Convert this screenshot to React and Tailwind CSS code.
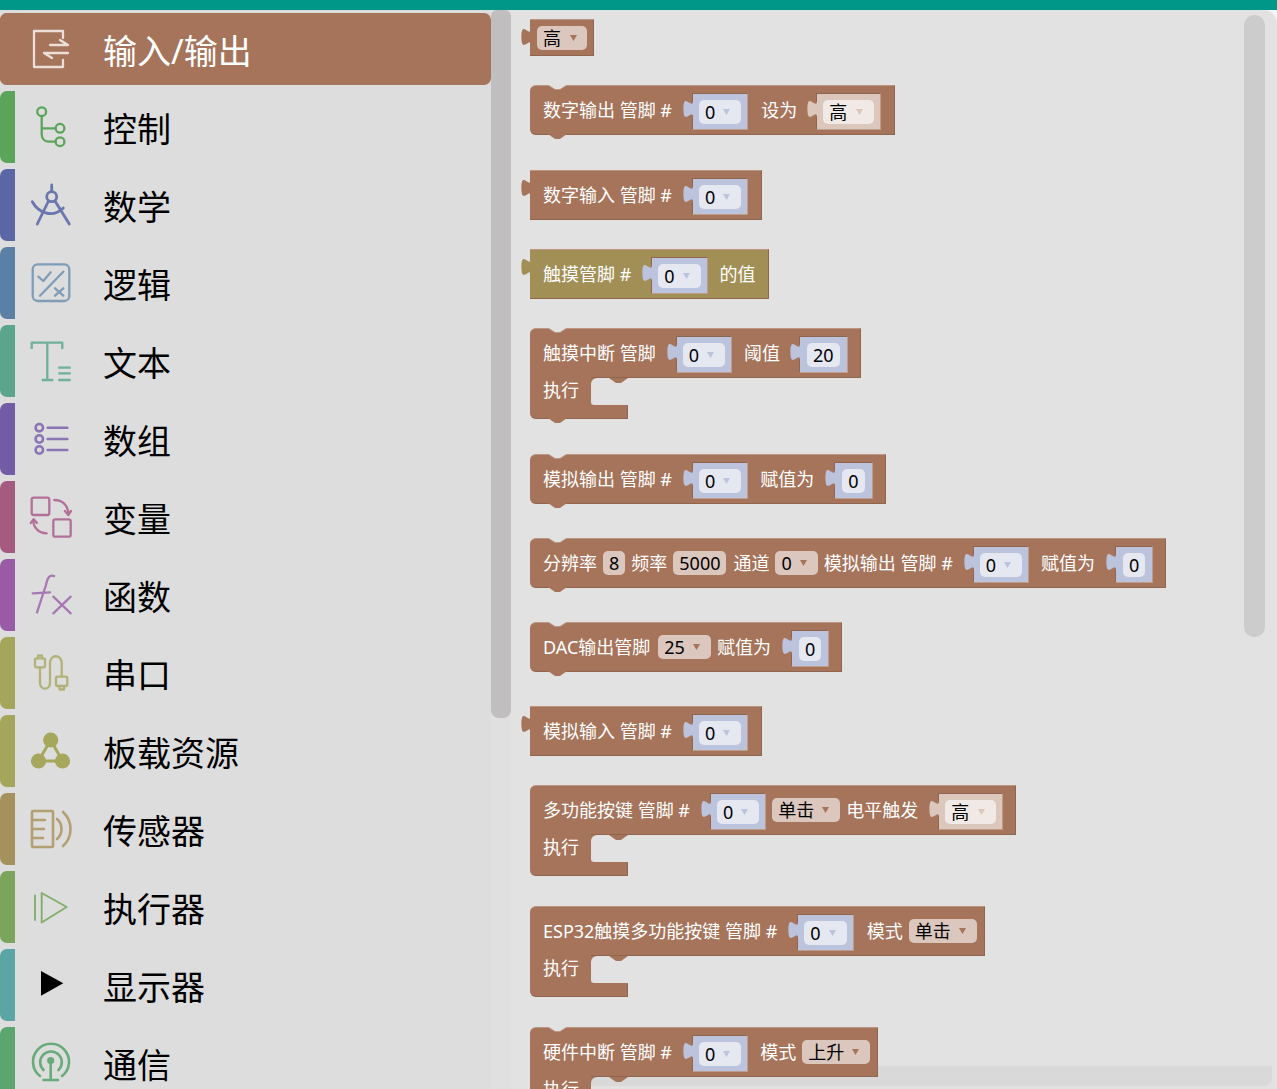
import React from "react";

const BROWN = "#a5745b";
const OLIVE = "#a28f56";

function Icon({ color, children, sw = 2.3 }) {
  return (
    <svg viewBox="27 0 48 72" fill="none" stroke={color} strokeWidth={sw} strokeLinecap="round" strokeLinejoin="round" className="ml-[12px] mr-[28px] h-[72px] w-[48px] shrink-0">
      {children}
    </svg>
  );
}

const categories = [
  { name: "输入/输出", color: BROWN, selected: true, icon: (
    <Icon color="#ecdfd9">
      <path d="M63 25V18H34V54H63V47" />
      <path d="M50 32H68L60 27" />
      <path d="M68 40H44L52 45" />
    </Icon>
  ) },
  { name: "控制", color: "#5ba55b", icon: (
    <Icon color="#5ba55b">
      <circle cx="41.7" cy="20.7" r="4.4" />
      <circle cx="60" cy="37.3" r="4.4" />
      <circle cx="60" cy="50.7" r="4.4" />
      <path d="M41.7 25V43C41.7 48 45 50.7 49 50.7H55.6M41.7 37.3H55.6" />
    </Icon>
  ) },
  { name: "数学", color: "#5b67a5", icon: (
    <Icon color="#6a76ad" sw={2.8}>
      <circle cx="51.7" cy="27.7" r="5" />
      <path d="M51.7 16V22.7M48.5 32L37.3 55M55 32L69.3 55M32.3 32.7C38 43 52 50 63.3 39" />
    </Icon>
  ) },
  { name: "逻辑", color: "#5b80a5", icon: (
    <Icon color="#7f9cb9">
      <rect x="32.7" y="17.3" width="36.6" height="36.7" rx="5" />
      <path d="M40 48.7L63.3 24.7M38.3 29.7L43.3 34L50.7 25.3M55 41.3L63.3 48.7M63.3 41.3L55 48.7" />
    </Icon>
  ) },
  { name: "文本", color: "#5ba58c", icon: (
    <Icon color="#6fb09a">
      <path d="M31.7 24V17.7H62.3V24M47.3 17.7V55M41.7 55H53.3M58.3 42.7H70.7M58.3 48.3H70.7M58.3 55H70.7" strokeLinecap="butt" />
    </Icon>
  ) },
  { name: "数组", color: "#745ba5", icon: (
    <Icon color="#8a74b4" sw={2.6}>
      <circle cx="39.3" cy="24.7" r="3.7" />
      <circle cx="39.3" cy="36" r="3.7" />
      <circle cx="39.3" cy="47" r="3.7" />
      <path d="M47.7 24.7H67.3M47.7 36H67.3M47.7 47H67.3" />
    </Icon>
  ) },
  { name: "变量", color: "#a55b80", icon: (
    <Icon color="#b3719a">
      <rect x="31.7" y="16.7" width="17.6" height="17.3" rx="2" />
      <rect x="53.3" y="38.3" width="17.4" height="17.4" rx="2" />
      <path d="M54.3 19C62 19 68.3 24 68.3 33M65 30L68.3 34L71 30" />
      <path d="M46.7 52.3C39 52.3 33.3 47 33.3 39M30.7 42L33.7 38.3L37 42" />
    </Icon>
  ) },
  { name: "函数", color: "#995ba5", icon: (
    <Icon color="#a878b3">
      <path d="M55 17.5C50 15 47.5 18 46 26L36.7 54.3" strokeLinecap="butt" />
      <path d="M32.7 34.3L50 33.3M53.3 37.7L70.7 54.3M70.7 37.7L53.3 54.3" />
    </Icon>
  ) },
  { name: "串口", color: "#a5a55b", icon: (
    <Icon color="#b1b277">
      <rect x="35" y="21.3" width="10" height="9" rx="1.5" />
      <rect x="56" y="39.7" width="11.3" height="9.3" rx="1.5" />
      <path d="M38 21.3V18.5H42V21.3M40 30.3V46C40 53.5 50 53.5 50 46V26C50 17 61.7 17 61.7 26V39.7M59.5 49V52.5H64V49" />
    </Icon>
  ) },
  { name: "板载资源", color: "#a5a55b", icon: (
    <svg viewBox="27 0 48 72" fill="#a5a85c" stroke="#a5a85c" className="ml-[12px] mr-[28px] h-[72px] w-[48px] shrink-0">
      <circle cx="50.7" cy="25" r="7.6" stroke="none" />
      <circle cx="38.5" cy="46" r="7.6" stroke="none" />
      <circle cx="62.5" cy="46" r="7.6" stroke="none" />
      <path d="M50.7 25L38.5 46H62.5Z" fill="none" strokeWidth="3" />
    </svg>
  ) },
  { name: "传感器", color: "#a5915b", icon: (
    <Icon color="#b39f72" sw={2.6}>
      <rect x="32" y="18" width="21" height="36" rx="1" />
      <path d="M32 27H45M32 36H44M32 45H43M57 26C63 31 63 41 57 46M63 19C73 28 73 44 63 53" />
    </Icon>
  ) },
  { name: "执行器", color: "#7aa55b", icon: (
    <Icon color="#83ae6b" sw={1.9}>
      <path d="M35 24.5V49" />
      <path d="M41.7 22L66.7 36L41.7 51.5Z" />
    </Icon>
  ) },
  { name: "显示器", color: "#5ba5a5", icon: (
    <svg viewBox="27 0 48 72" className="ml-[12px] mr-[28px] h-[72px] w-[48px] shrink-0">
      <path d="M41 22L63.3 34.3L41 46.7Z" fill="#000" />
    </svg>
  ) },
  { name: "通信", color: "#5ba56e", icon: (
    <Icon color="#67ab7a" sw={2.6}>
      <path d="M40 49A18 18 0 1 1 62 49" />
      <path d="M43.5 43A10.8 10.8 0 1 1 58.5 43" />
      <circle cx="50.7" cy="33.5" r="3.6" fill="#67ab7a" stroke="none" />
      <path d="M50.7 36V53M43.5 53H58" />
    </Icon>
  ) },
];

function Tab({ fill, className }) {
  return (
    <svg width="10" height="18" viewBox="0 0 10 18" className={"absolute overflow-visible " + className}>
      <path d="M10 0C10 12 0.4 -9.6 0.4 9S10 6 10 18Z" fill={fill} />
    </svg>
  );
}

function Arrow({ color }) {
  return (
    <svg width="7" height="6" viewBox="0 0 7 6" className="shrink-0">
      <path d="M0 0H7L3.5 6Z" fill={color} />
    </svg>
  );
}

function Text({ children, className = "" }) {
  return <span className={"whitespace-pre text-[18px] leading-none text-white " + className}>{children}</span>;
}

function Field({ text, arrow, bg = "bg-[#dbc7bd]", arrowColor = "#a5745b", gap = "gap-[8px]", className = "" }) {
  return (
    <div className={"flex h-[24px] shrink-0 items-center rounded-[5px] text-[18px] leading-none text-black " + bg + " " + (arrow ? "pl-[6px] pr-[11px] " + gap + " " : "px-[6px] ") + className}>
      <span className="whitespace-pre">{text}</span>
      {arrow && <Arrow color={arrowColor} />}
    </div>
  );
}

function Socket({ text = "0", arrow = true, tone = "blue", className = "ml-[20px] mr-[12px]" }) {
  const blue = tone === "blue";
  const fill = blue ? "#bcc3dc" : "#dcc7bd";
  return (
    <div className={"relative mt-[3px] flex h-[37px] shrink-0 items-center justify-center border border-b-[#bf9b8a] border-l-[#8f6550] border-r-[#bf9b8a] border-t-[#8f6550] " + (arrow ? "px-[6px] " : "px-[7px] ") + (blue ? "bg-[#bcc3dc] " : "bg-[#dcc7bd] ") + className}>
      <Tab fill={fill} className="left-[-10px] top-[6px]" />
      <Field text={text} arrow={arrow} bg={blue ? "bg-[#e5e7f1]" : "bg-[#f0e9e5]"} arrowColor={fill} gap={blue ? "gap-[8px]" : "gap-[9px]"} />
    </div>
  );
}

function Row({ color = BROWN, top, bottom, output, corner = "", pr = "pr-[13px]", h = "h-[50px]", pl = "pl-[13px]", children, className = "" }) {
  const notchTop = (
    <svg width="19" height="5" viewBox="0 0 19 5" className="absolute left-[18px] top-[-1px]">
      <path d="M0 0L7 4.5H12L19 0Z" fill="#e2e2e2" />
      <path d="M0 0L7 4.5H12L19 0" fill="none" stroke="#bc9583" strokeWidth="1" />
    </svg>
  );
  const notchBottom = (
    <svg width="19" height="6" viewBox="0 0 19 6" className="absolute left-[18px] top-full">
      <path d="M0 0L7 5H12L19 0Z" fill={color} />
    </svg>
  );
  return (
    <div style={{ backgroundColor: color }} className={"relative flex items-center border-b border-r border-t border-b-[#8f6550] border-r-[#8f6550] border-t-[#bc9583] " + h + " " + pl + " " + pr + " " + corner + " " + className}>
      {top && notchTop}
      {output && <Tab fill={color} className="left-[-9px] top-[8px]" />}
      {children}
      {bottom && notchBottom}
    </div>
  );
}

function Statement({ top, bottom, className = "", children, pr }) {
  return (
    <div className={"flex flex-col items-start " + className}>
      <Row top={top} corner="rounded-tl-[6px]" pr={pr}>{children}</Row>
      <div className="flex h-[27px] w-[98px]">
        <div className="relative z-10 -mt-px h-[28px] w-[61px] bg-[#a5745b] pl-[13px] pt-[2px]">
          <Text>执行</Text>
        </div>
        <div className="relative flex-1">
          <svg width="37" height="28" viewBox="0 0 37 28" className="absolute left-0 top-0">
            <path d="M0 0H6A6 6 0 0 0 0 6Z" fill={BROWN} />
            <path d="M0 27V24A3 3 0 0 0 3 27Z" fill={BROWN} />
            <path d="M18 0L25 5H30L37 0Z" fill={BROWN} />
          </svg>
        </div>
      </div>
      <div className="relative h-[14px] w-[98px] rounded-bl-[6px] border-b border-r border-t border-b-[#8f6550] border-r-[#8f6550] border-t-[#a5745b] bg-[#a5745b]">
        {bottom && (
          <svg width="19" height="6" viewBox="0 0 19 6" className="absolute left-[18px] top-full">
            <path d="M0 0L7 5H12L19 0Z" fill={BROWN} />
          </svg>
        )}
      </div>
    </div>
  );
}

export default function App() {
  return (
    <div className="flex h-[1089px] w-[1277px] flex-col overflow-hidden bg-[#f4f4f4] font-['Noto_Sans','Noto_Sans_CJK_SC',sans-serif]">
      <div className="h-[10px] shrink-0 bg-[#009688]" />
      <div className="flex min-h-0 flex-1">
        <aside className="flex w-[491px] shrink-0 flex-col gap-[6px] bg-[#dddddd] pt-[3px]">
          {categories.map((c) => (
            <div key={c.name} className={"flex h-[72px] shrink-0 items-center rounded-l-[7px] " + (c.selected ? "rounded-r-[7px] bg-[#a5745b]" : "")}>
              <div style={{ backgroundColor: c.color }} className="h-full w-[15px] shrink-0 rounded-l-[7px]" />
              {c.icon}
              <span className={"whitespace-pre pt-[4px] text-[34px] leading-none " + (c.selected ? "text-white" : "text-black")}>{c.name}</span>
            </div>
          ))}
        </aside>
        <div className="w-[20px] shrink-0 bg-[#e0e0e0]">
          <div className="h-[708px] rounded-b-[8px] rounded-t-[6px] bg-[#c0bebe]" />
        </div>
        <main className="relative min-w-0 flex-1 overflow-hidden rounded-tr-[14px] bg-[#e2e2e2]">
          <div className="absolute bottom-[3px] left-[30px] right-[5px] h-[20px] rounded-br-[8px] bg-[#d9d9d9]" />
          <div className="absolute right-[12px] top-[5px] h-[622px] w-[21px] rounded-[10px] bg-[#cccccc]" />
          <div className="relative flex flex-col items-start pl-[19px] pt-[9px]">
            <Row output h="h-[37px]" pl="pl-[7px]" pr="pr-[6px]">
              <Field text="高" arrow gap="gap-[9px]" className="!pr-[10px]" />
            </Row>

            <Row top bottom corner="rounded-l-[6px]" className="mt-[29px]">
              <Text>数字输出 管脚 #</Text>
              <Socket className="ml-[20px] mr-[13px]" />
              <Text>设为</Text>
              <Socket text="高" tone="brown" className="ml-[19px]" />
            </Row>

            <Row output className="mt-[35px]">
              <Text>数字输入 管脚 #</Text>
              <Socket className="ml-[20px]" />
            </Row>

            <Row output color={OLIVE} pr="pr-[12px]" className="mt-[29px]">
              <Text>触摸管脚 #</Text>
              <Socket className="ml-[20px] mr-[12px]" />
              <Text>的值</Text>
            </Row>

            <Statement top bottom className="mt-[29px]" pr="pr-[12px]">
              <Text>触摸中断 管脚</Text>
              <Socket className="ml-[20px] mr-[12px]" />
              <Text>阈值</Text>
              <Socket text="20" arrow={false} className="ml-[19px]" />
            </Statement>

            <Row top bottom corner="rounded-l-[6px]" pr="pr-[12px]" className="mt-[35px]">
              <Text>模拟输出 管脚 #</Text>
              <Socket className="ml-[20px] mr-[12px]" />
              <Text>赋值为</Text>
              <Socket arrow={false} className="ml-[20px]" />
            </Row>

            <Row top bottom corner="rounded-l-[6px]" pr="pr-[12px]" className="mt-[34px]">
              <Text>分辨率</Text>
              <Field text="8" className="mx-[6px]" />
              <Text>频率</Text>
              <Field text="5000" className="ml-[6px] mr-[7px]" />
              <Text>通道</Text>
              <Field text="0" arrow className="mx-[6px]" />
              <Text>模拟输出 管脚 #</Text>
              <Socket className="ml-[20px] mr-[12px]" />
              <Text>赋值为</Text>
              <Socket arrow={false} className="ml-[20px]" />
            </Row>

            <Row top bottom corner="rounded-l-[6px]" pr="pr-[12px]" className="mt-[34px]">
              <Text>DAC输出管脚</Text>
              <Field text="25" arrow className="ml-[8px] mr-[6px]" />
              <Text>赋值为</Text>
              <Socket arrow={false} className="ml-[20px]" />
            </Row>

            <Row output className="mt-[34px]">
              <Text>模拟输入 管脚 #</Text>
              <Socket className="ml-[20px]" />
            </Row>

            <Statement className="mt-[29px]" pr="pr-[12px]">
              <Text>多功能按键 管脚 #</Text>
              <Socket className="ml-[20px] mr-[6px]" />
              <Field text="单击" arrow className="mr-[6px]" />
              <Text>电平触发</Text>
              <Socket text="高" tone="brown" className="ml-[20px]" />
            </Statement>

            <Statement className="mt-[30px]" pr="pr-[7px]">
              <Text>ESP32触摸多功能按键 管脚 #</Text>
              <Socket className="ml-[20px] mr-[13px]" />
              <Text className="mr-[6px]">模式</Text>
              <Field text="单击" arrow />
            </Statement>

            <Statement top className="mt-[30px]" pr="pr-[7px]">
              <Text>硬件中断 管脚 #</Text>
              <Socket className="ml-[20px] mr-[12px]" />
              <Text className="mr-[6px]">模式</Text>
              <Field text="上升" arrow />
            </Statement>
          </div>
        </main>
      </div>
    </div>
  );
}
